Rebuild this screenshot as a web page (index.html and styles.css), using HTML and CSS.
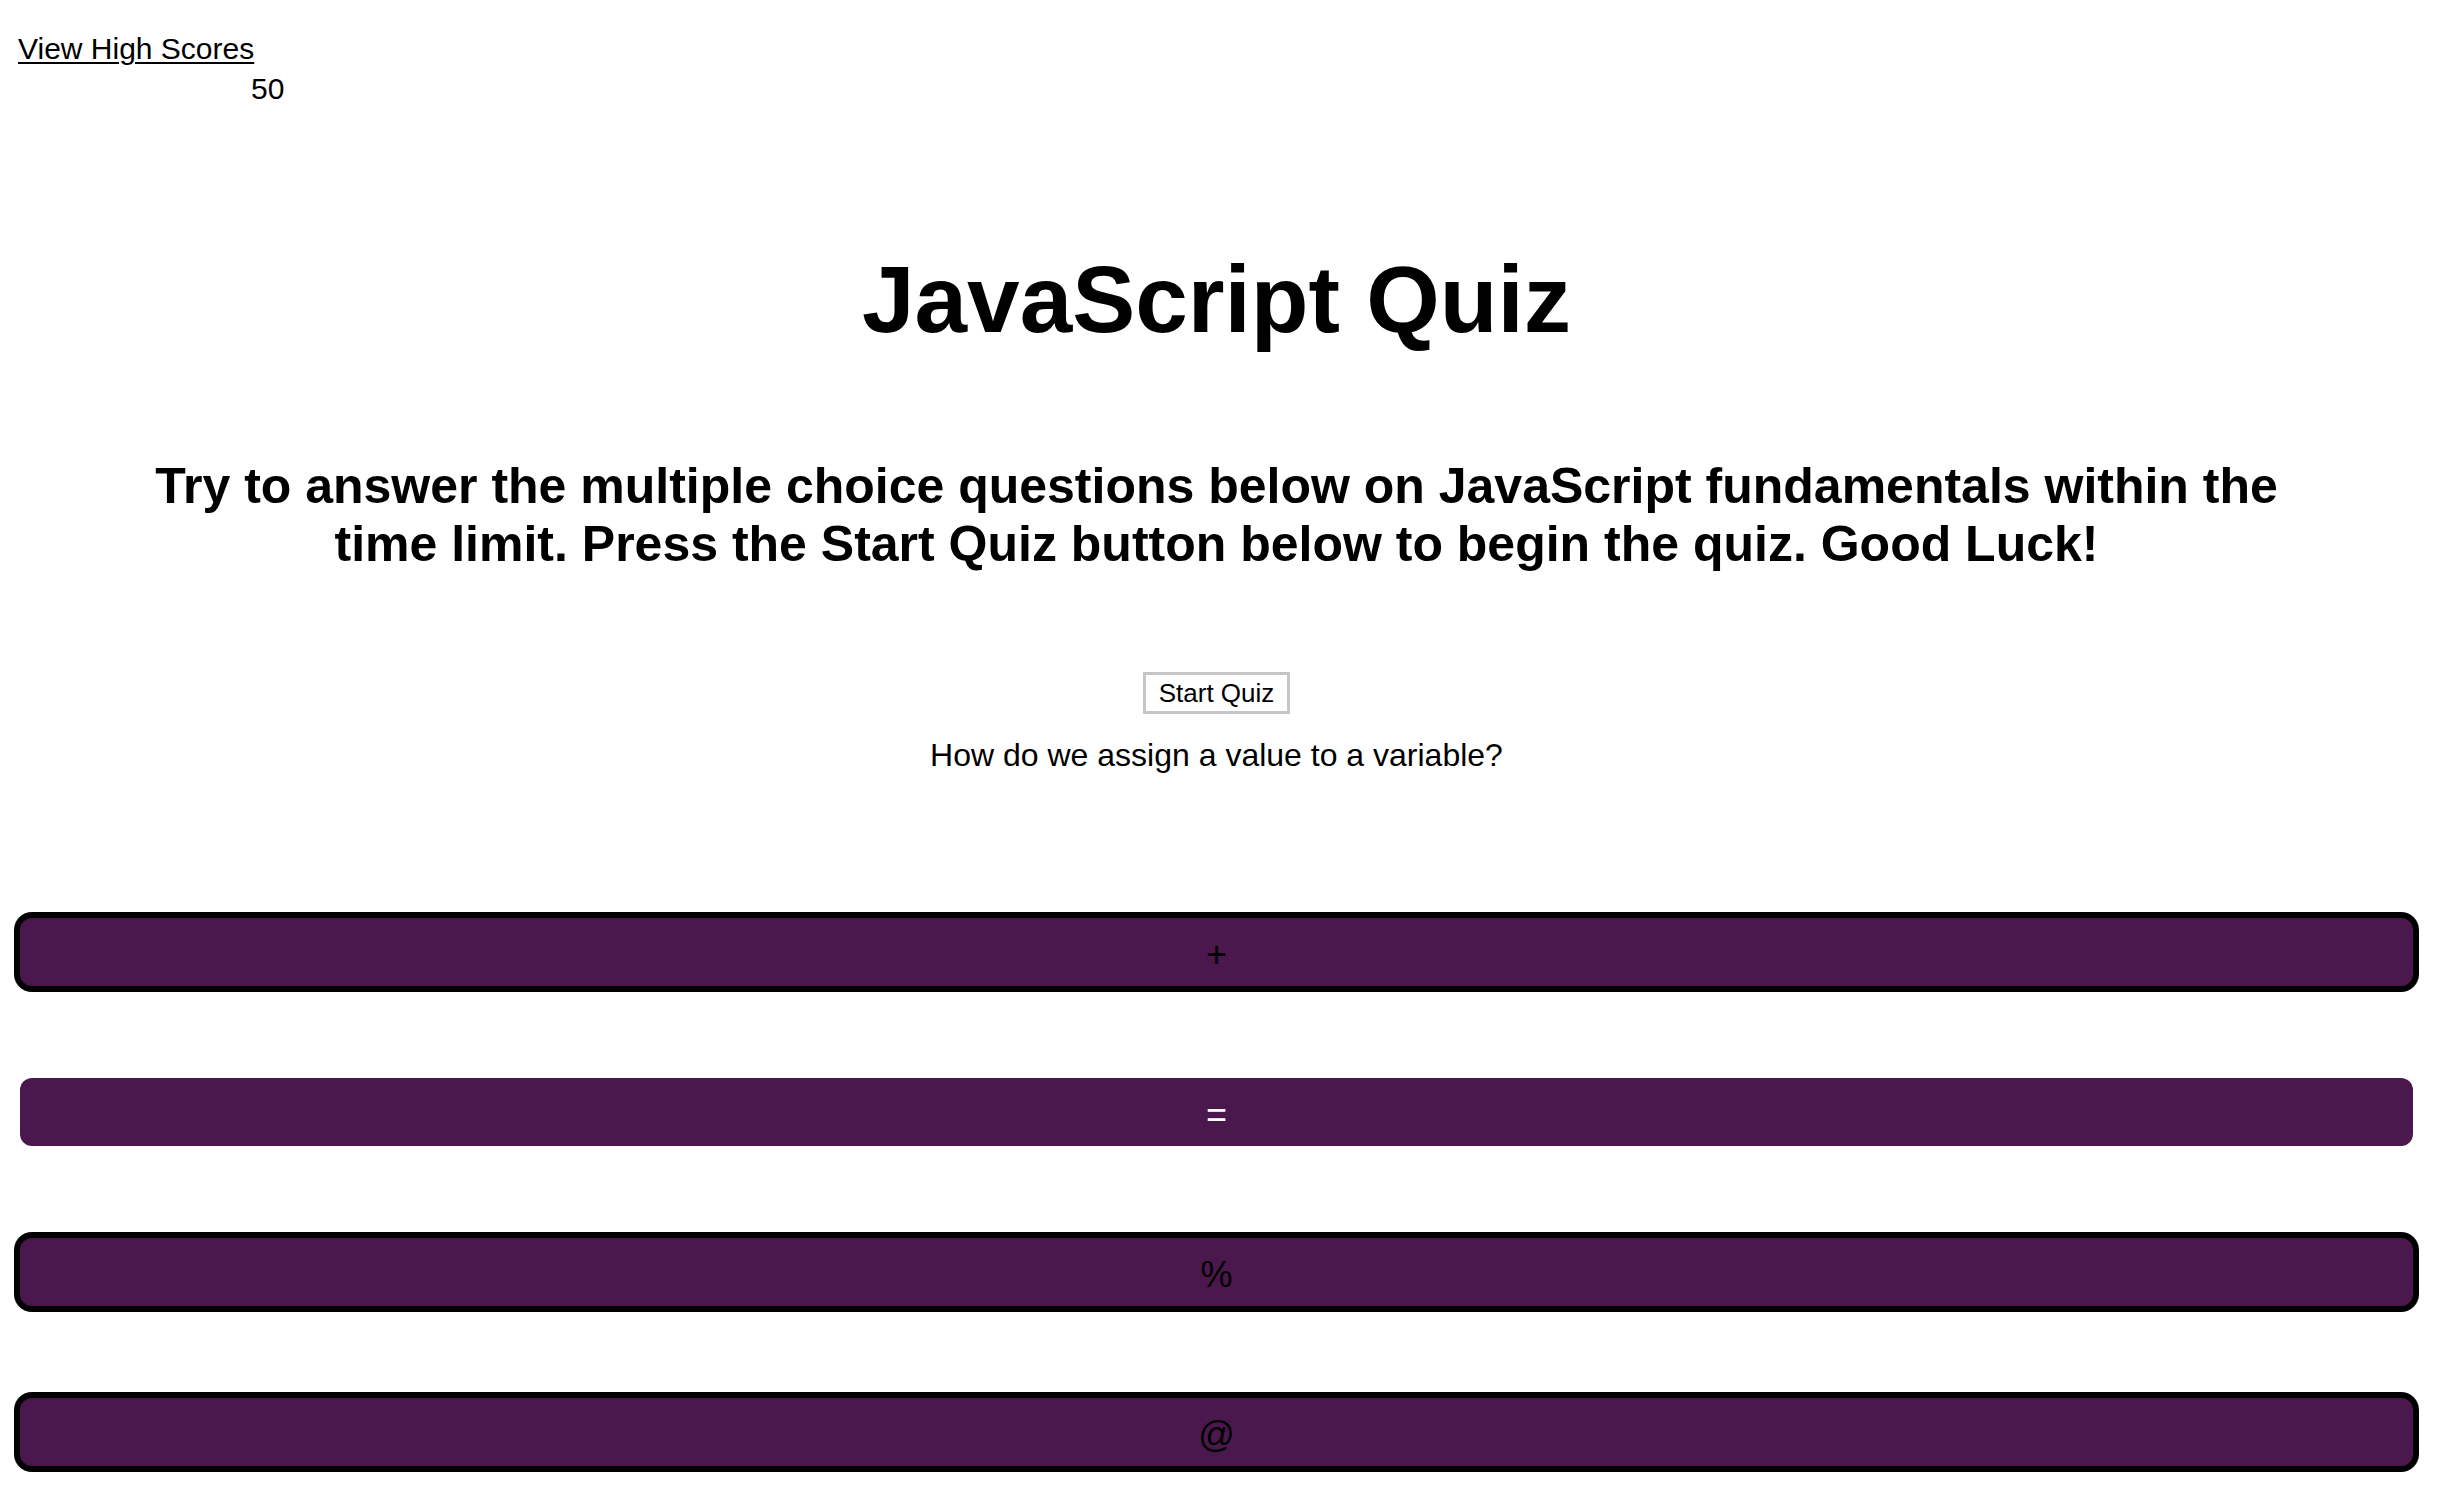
FILE: index.html
```html
<!DOCTYPE html>
<html lang="en">
<head>
<meta charset="utf-8">
<title>JavaScript Quiz</title>
<link rel="stylesheet" href="styles.css">
</head>
<body>
<header class="top">
  <a class="scores-link" href="#">View High Scores</a>
  <div class="timer">50</div>
</header>
<main class="page">
  <h1 class="title">JavaScript Quiz</h1>
  <p class="intro">Try to answer the multiple choice questions below on JavaScript fundamentals within the time limit. Press the Start Quiz button below to begin the quiz. Good Luck!</p>
  <div class="start-row"><button class="start-btn">Start Quiz</button></div>
  <p class="question">How do we assign a value to a variable?</p>
  <div class="answers">
    <button class="answer outlined">+</button>
    <button class="answer active">=</button>
    <button class="answer outlined">%</button>
    <button class="answer outlined">@</button>
  </div>
</main>
</body>
</html>
```

FILE: styles.css
```css
html, body {
  margin: 0;
  padding: 0;
  background: #ffffff;
}

body {
  font-family: "Liberation Sans", Arial, Helvetica, sans-serif;
  color: #000;
}

.top {
  padding: 29px 0 0 18px;
  font-size: 30px;
  line-height: 40px;
}

.scores-link {
  color: #000;
  text-decoration: underline;
  text-decoration-thickness: 2px;
  text-underline-offset: 3px;
}

.timer {
  padding-left: 233px;
}

.page {
  padding: 0 29px 12px 20px;
  text-align: center;
}

.title {
  margin: 135px 0 0;
  font-size: 94.5px;
  line-height: 110px;
  font-weight: bold;
}

.intro {
  width: 2180px;
  margin: 103px auto 0;
  font-size: 50px;
  line-height: 58px;
  font-weight: bold;
}

.start-row {
  margin-top: 99px;
  display: flex;
  justify-content: center;
}

.start-btn {
  font-family: "Liberation Sans", Arial, Helvetica, sans-serif;
  font-size: 26px;
  line-height: 36px;
  padding: 0 13px;
  margin: 0;
  border: 3px solid #c6c6c6;
  background: #ffffff;
  color: #000;
  border-radius: 0;
}

.question {
  margin: 21px 0 0;
  font-size: 32px;
  line-height: 40px;
}

.answers {
  margin-top: 143px;
  display: flex;
  flex-direction: column;
  gap: 92px;
}

.answer {
  display: block;
  box-sizing: border-box;
  width: 100%;
  height: 68px;
  margin: 0;
  padding: 5px 0 0;
  border: none;
  border-radius: 12px;
  background: #4a184c;
  color: #000;
  font-family: "Liberation Sans", Arial, Helvetica, sans-serif;
  font-size: 36px;
  line-height: 63px;
}

.answer.outlined {
  box-shadow: 0 0 0 6px #000;
}

.answer.active {
  color: #ffffff;
}
```
